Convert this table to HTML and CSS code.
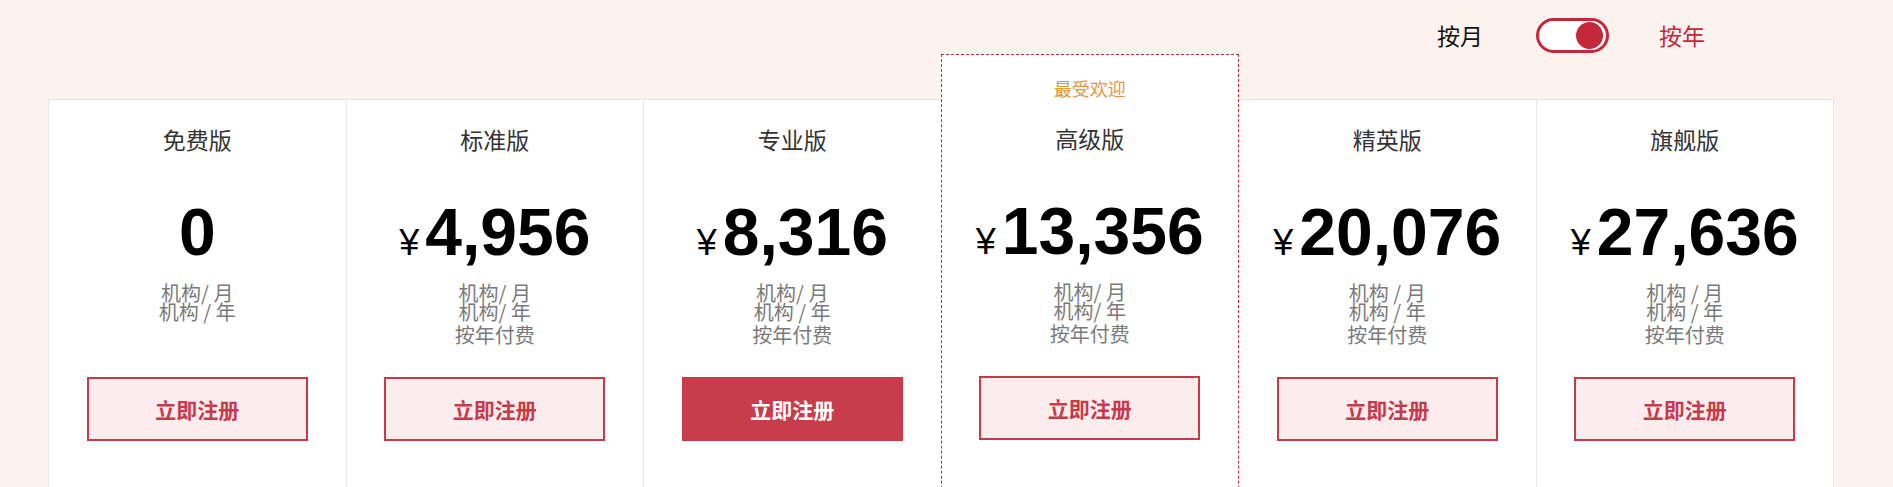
FILE: index.html
```html
<!DOCTYPE html>
<html lang="zh-CN">
<head>
<meta charset="utf-8">
<title>价格方案</title>
<link rel="stylesheet" href="styles.css">
</head>
<body>
<div class="page">
  <div class="switch-bar">
    <span class="switch-label">按月</span>
    <span class="toggle"><span class="knob"></span></span>
    <span class="switch-label active">按年</span>
  </div>
  <div class="plans">
    <div class="card">
      <div class="title">免费版</div>
      <div class="price"><span class="num">0</span></div>
      <div class="units">
        <div class="u-month">机构/ 月</div>
        <div class="u-year">机构 / 年</div>
      </div>
      <div class="btn">立即注册</div>
    </div>
    <div class="card">
      <div class="title">标准版</div>
      <div class="price"><span class="yen">¥</span><span class="num">4,956</span></div>
      <div class="units">
        <div class="u-month">机构/ 月</div>
        <div class="u-year">机构/ 年</div>
        <div class="u-fee">按年付费</div>
      </div>
      <div class="btn">立即注册</div>
    </div>
    <div class="card">
      <div class="title">专业版</div>
      <div class="price"><span class="yen">¥</span><span class="num">8,316</span></div>
      <div class="units">
        <div class="u-month">机构/ 月</div>
        <div class="u-year">机构 / 年</div>
        <div class="u-fee">按年付费</div>
      </div>
      <div class="btn solid">立即注册</div>
    </div>
    <div class="card popular">
      <div class="badge">最受欢迎</div>
      <div class="title">高级版</div>
      <div class="price"><span class="yen">¥</span><span class="num">13,356</span></div>
      <div class="units">
        <div class="u-month">机构/ 月</div>
        <div class="u-year">机构/ 年</div>
        <div class="u-fee">按年付费</div>
      </div>
      <div class="btn">立即注册</div>
    </div>
    <div class="card">
      <div class="title">精英版</div>
      <div class="price"><span class="yen">¥</span><span class="num">20,076</span></div>
      <div class="units">
        <div class="u-month">机构 / 月</div>
        <div class="u-year">机构 / 年</div>
        <div class="u-fee">按年付费</div>
      </div>
      <div class="btn">立即注册</div>
    </div>
    <div class="card last">
      <div class="title">旗舰版</div>
      <div class="price"><span class="yen">¥</span><span class="num">27,636</span></div>
      <div class="units">
        <div class="u-month">机构 / 月</div>
        <div class="u-year">机构 / 年</div>
        <div class="u-fee">按年付费</div>
      </div>
      <div class="btn">立即注册</div>
    </div>
  </div>
</div>
</body>
</html>
```
FILE: styles.css
```css
* { box-sizing: border-box; }
html, body {
  margin: 0;
  padding: 0;
  background: #fcf3ee;
  font-family: "Noto Sans CJK SC", "Liberation Sans", sans-serif;
  overflow: hidden;
}
.page {
  padding: 0 59px 0 48px;
}
.switch-bar {
  display: flex;
  justify-content: flex-end;
  align-items: center;
  height: 54px;
  padding: 18px 129px 1px 0;
}
.switch-label {
  font-size: 23px;
  line-height: 35px;
  color: #111;
}
.switch-label.active {
  color: #c4283b;
}
.toggle {
  display: flex;
  justify-content: flex-end;
  align-items: center;
  width: 73px;
  height: 35px;
  margin: 0 50px 0 53px;
  padding: 0 3px;
  border: 3px solid #c4283b;
  border-radius: 18px;
  background: #fff;
}
.knob {
  width: 27px;
  height: 27px;
  border-radius: 50%;
  background: #c4283b;
}
.plans {
  display: flex;
  align-items: flex-start;
}
.card {
  flex: 1 1 0;
  display: flex;
  flex-direction: column;
  align-items: center;
  min-height: 440px;
  margin-top: 45px;
  padding-top: 24px;
  background: #fff;
  border-top: 1px solid #e6e6e6;
  border-left: 1px solid #e6e6e6;
}
.card.last {
  border-right: 1px solid #e6e6e6;
}
.card.popular {
  margin-top: 0;
  padding-top: 0;
  min-height: 485px;
  border: 1px dashed #c4283b;
  margin-right: -1px;
  position: relative;
  z-index: 1;
}
.badge {
  height: 68px;
  padding-top: 22px;
  font-size: 18px;
  line-height: 22px;
  color: #e8963b;
}
.title {
  font-size: 23px;
  line-height: 30px;
  color: #333;
}
.price {
  display: flex;
  align-items: baseline;
  margin-top: 42px;
  height: 72px;
  font-family: "Liberation Sans", Arial, sans-serif;
  color: #000;
}
.yen {
  font-size: 36px;
  line-height: 72px;
  margin-right: 6px;
}
.num {
  font-size: 66px;
  line-height: 72px;
  font-weight: 700;
}
.units {
  height: 96px;
  margin-top: 13px;
  text-align: center;
  font-size: 20px;
  line-height: 23px;
  color: #7a7a7a;
}
.u-year {
  margin-top: -4px;
}
.u-fee {
  margin-top: 0;
}
.btn {
  display: flex;
  align-items: center;
  justify-content: center;
  width: 221px;
  height: 64px;
  border: 2px solid #c83a4a;
  background: #fbecee;
  color: #c83a4a;
  font-size: 21px;
  font-weight: 700;
}
.btn.solid {
  background: #c83d4b;
  color: #fff;
}
```
